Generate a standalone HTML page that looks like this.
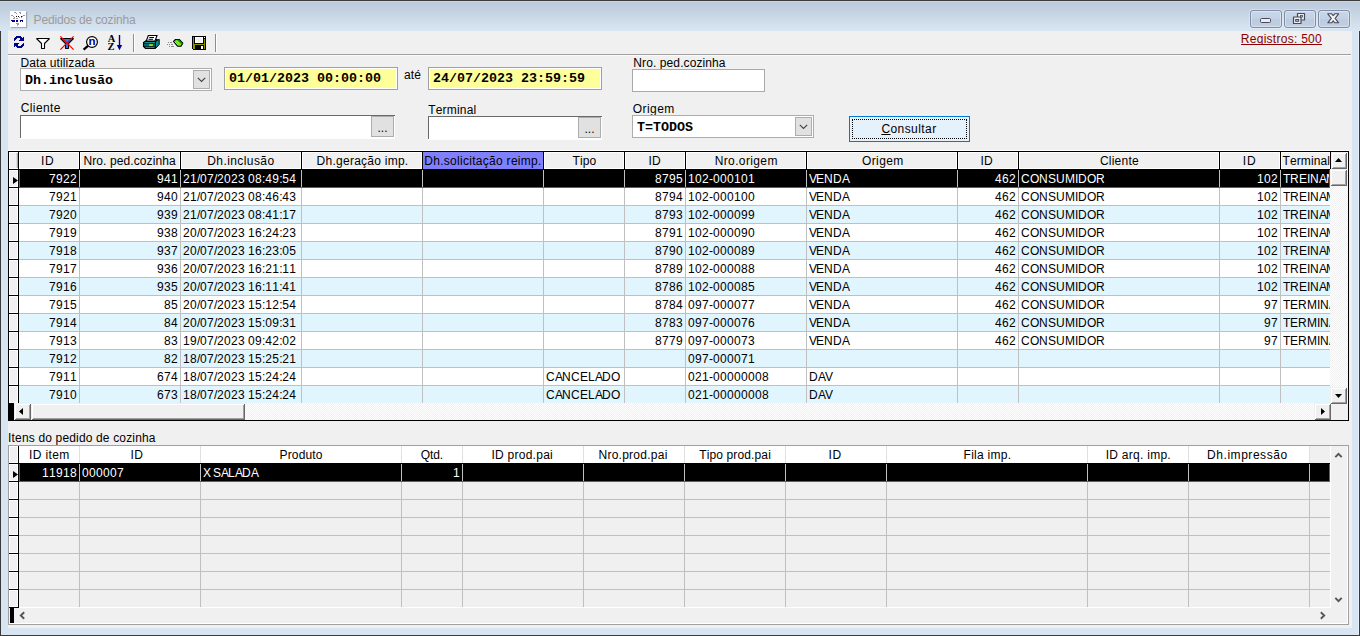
<!DOCTYPE html>
<html lang="pt-BR"><head><meta charset="utf-8"><title>Pedidos de cozinha</title>
<style>
html,body{margin:0;padding:0;}
body{width:1360px;height:636px;overflow:hidden;background:#d7e4f2;position:relative;font-family:"Liberation Sans",Arial,sans-serif;font-size:12px;color:#000;font-kerning:none;}
.a{position:absolute;}
.t{position:absolute;white-space:nowrap;line-height:14px;height:14px;font-size:12px;}
.m{position:absolute;white-space:nowrap;font-family:"Liberation Mono","DejaVu Sans Mono",monospace;font-weight:bold;font-size:13.33px;line-height:15px;height:15px;}
.clip{overflow:hidden;}
</style></head>
<body>
<div class="a" style="left:0px;top:0px;width:1360px;height:1px;background:#3c3c3c;"></div>
<div class="a" style="left:0px;top:1px;width:1360px;height:30px;background:linear-gradient(#bccbdb,#c2d0e0 30%,#d0ddeb 70%,#d8e5f3);"></div>
<div class="a" style="left:0px;top:1px;width:1360px;height:1px;background:#c8d6e6;"></div>
<div class="a" style="left:0px;top:31px;width:1px;height:605px;background:#3a3a3a;"></div>
<div class="a" style="left:1358px;top:31px;width:1px;height:604px;background:#e6eef8;"></div>
<div class="a" style="left:1359px;top:31px;width:1px;height:605px;background:#3a3a3a;"></div>
<div class="a" style="left:0px;top:635px;width:1360px;height:1px;background:#3a3a3a;"></div>
<div class="a" style="left:8px;top:31px;width:1344px;height:597px;background:#f0f0f0;"></div>
<div class="a" style="left:10px;top:11px;width:16px;height:16px;background:#fff;box-shadow:1px 1px 1px rgba(90,100,120,.45);"></div>
<svg class="a" style="left:10px;top:11px" width="16" height="16" viewBox="0 0 16 16" shape-rendering="crispEdges"><path d="M4 1h2v1h-2zM9 1h2v1h-2zM6 2h1v1h-1zM10 2h1v1h-1zM1 4h2v1h-2zM13 4h2v1h-2zM3 5h1v1h-1zM12 5h1v1h-1zM4 6h1v1h-1zM9 6h1v1h-1zM11 6h1v1h-1zM3 7h2v1h-2zM6 7h2v1h-2zM6 12h3v1h-3zM7 13h2v1h-2zM7 14h1v1h-1z" fill="#9c9c9c"/><path d="M6 5h1v1h-1zM8 5h1v1h-1zM11 5h1v1h-1z" fill="#111"/><path d="M1 9h4v1h-4zM6 9h2v1h-2zM10 9h3v1h-3zM2 10h3v1h-3zM6 10h2v1h-2zM10 10h1v1h-1zM12 10h1v1h-1z" fill="#00008b"/></svg>
<div class="t" style="left:33.62px;top:13px;letter-spacing:-0.16px;color:#9b9b9b;">Pedidos de cozinha</div>
<div class="a" style="left:1250px;top:10px;width:30px;height:16px;border:1px solid #7f8dab;border-radius:3px;background:linear-gradient(#c9d7e8,#c2d1e4 48%,#bbcbe0 52%,#c1d0e4);box-shadow:inset 0 0 0 1px rgba(255,255,255,.38),0 0 0 1px rgba(255,255,255,.3);"></div>
<div class="a" style="left:1260px;top:18px;width:9px;height:3px;background:#ececec;border:1px solid #454b5c;border-radius:1.500px;"></div>
<div class="a" style="left:1284px;top:10px;width:30px;height:16px;border:1px solid #7f8dab;border-radius:3px;background:linear-gradient(#c9d7e8,#c2d1e4 48%,#bbcbe0 52%,#c1d0e4);box-shadow:inset 0 0 0 1px rgba(255,255,255,.38),0 0 0 1px rgba(255,255,255,.3);"></div>
<svg class="a" style="left:1292px;top:12px" width="14" height="13" viewBox="0 0 14 13"><g fill="#f0f0f0" stroke="#454b5c" stroke-width="1.200" stroke-linejoin="round"><path d="M5.500 1.500h7v6.500h-7z"/><path d="M1.500 5h7.500v6.500h-7.500z"/></g><rect x="8.500" y="3.500" width="2" height="1.500" fill="#c6d3e5" stroke="#454b5c" stroke-width=".8"/><rect x="3.700" y="7.500" width="3" height="1.800" fill="#c6d3e5" stroke="#454b5c" stroke-width="1"/></svg>
<div class="a" style="left:1318px;top:10px;width:30px;height:16px;border:1px solid #7f8dab;border-radius:3px;background:linear-gradient(#c9d7e8,#c2d1e4 48%,#bbcbe0 52%,#c1d0e4);box-shadow:inset 0 0 0 1px rgba(255,255,255,.38),0 0 0 1px rgba(255,255,255,.3);"></div>
<svg class="a" style="left:1327px;top:13px" width="13" height="11" viewBox="0 0 13 11"><path d="M0.800 0.800L4.600 0.800L6.200 2.700L7.800 0.800L11.600 0.800L8.100 5.300L11.600 9.800L7.800 9.800L6.200 7.900L4.600 9.800L0.800 9.800L4.300 5.300z" fill="#f4f4f4" stroke="#454b5c" stroke-width="1.100" stroke-linejoin="round"/></svg>
<div class="a" style="left:8px;top:54px;width:1343px;height:1px;background:#a0a0a0;"></div>
<div class="a" style="left:8px;top:55px;width:1343px;height:1px;background:#fbfbfb;"></div>
<div class="t" style="left:1240.82px;top:32px;letter-spacing:0.27px;color:#8b0000;text-decoration:underline;text-decoration-skip-ink:none;height:13px;overflow:hidden;">Registros: 500</div>
<div class="a" style="left:133px;top:34px;width:1px;height:18px;background:#8e8e8e;"></div>
<div class="a" style="left:134px;top:34px;width:1px;height:18px;background:#fff;"></div>
<div class="a" style="left:215px;top:34px;width:1px;height:18px;background:#8e8e8e;"></div>
<div class="a" style="left:216px;top:34px;width:1px;height:18px;background:#fff;"></div>
<svg class="a" style="left:14px;top:36px" width="10" height="12" viewBox="0 0 10 12" shape-rendering="crispEdges"><path d="M2 0h5v1h-5zM1 1h7v1h-7zM9 1h1v1h-1zM0 2h3v1h-3zM6 2h4v1h-4zM0 3h2v1h-2zM6 3h4v1h-4zM0 4h1v1h-1zM5 4h5v1h-5zM0 7h5v1h-5zM9 7h1v1h-1zM0 8h4v1h-4zM8 8h2v1h-2zM0 9h4v1h-4zM7 9h3v1h-3zM0 10h1v1h-1zM2 10h7v1h-7zM3 11h5v1h-5z" fill="#00008b"/></svg>
<svg class="a" style="left:35px;top:37px" width="16" height="13" viewBox="0 0 16 13"><path d="M1.500 1.500H14.500L9.500 6.500V11.500H6.500V6.500Z" fill="#fff" stroke="#000" stroke-width="1.100" stroke-linejoin="bevel"/></svg>
<svg class="a" style="left:59px;top:35px" width="16" height="16" viewBox="0 0 16 16"><path d="M1.500 3.500H14.500L9.500 8.500V13.500H6.500V8.500Z" fill="#1787ff" stroke="#000" stroke-width="1.100" stroke-linejoin="bevel"/><path d="M1.400 1.400L14.600 14.600M14.600 1.400L1.400 14.600" stroke="#f00" stroke-width="1.300" fill="none"/></svg>
<svg class="a" style="left:82px;top:35px" width="17" height="16" viewBox="0 0 17 16"><path d="M6.300 10.700L1.600 14.600" stroke="#000" stroke-width="2.300" fill="none"/><circle cx="10" cy="7" r="5.400" fill="#fff" stroke="#000" stroke-width="1.200"/><text x="10" y="10" text-anchor="middle" font-family="Liberation Sans,Arial,sans-serif" font-weight="bold" font-size="11.500" fill="#00008b">n</text></svg>
<svg class="a" style="left:106px;top:34px" width="18" height="18" viewBox="0 0 18 18"><text x="5.500" y="8" text-anchor="middle" font-family="Liberation Serif,Times New Roman,serif" font-weight="bold" font-size="10.500" fill="#000">A</text><text x="5" y="16" text-anchor="middle" font-family="Liberation Serif,Times New Roman,serif" font-weight="bold" font-size="10.500" fill="#000">Z</text><path d="M13.500 1V12" stroke="#00008b" stroke-width="1.400"/><path d="M10.800 11H16.200L13.500 16.200z" fill="#00008b"/></svg>
<svg class="a" style="left:142px;top:34px" width="19" height="16" viewBox="0 0 19 16"><path d="M13.500 7.500L17.200 5.300L17.200 10.500L13.500 14.500z" fill="#0a8c8c" stroke="#000" stroke-width="1"/><path d="M3 7.500L5 5.500L15.500 5.500L13.500 7.500z" fill="#0a8c8c" stroke="#000" stroke-width="1"/><path d="M1.500 8.500L3 7.500L13.500 7.500L13.500 13.500L12.500 14.500L3.500 14.500L1.500 12.500z" fill="#009696" stroke="#000" stroke-width="1.100"/><path d="M2 9.800H13M2 12.200H13" stroke="#000" stroke-width="1"/><rect x="7.200" y="10.400" width="3.600" height="1.300" fill="#ff0"/><path d="M4.300 7L6.300 1.500L15 1.500L13 7z" fill="#fff" stroke="#000" stroke-width="1.100"/><path d="M7.300 3.500H12M6.500 5.300H11" stroke="#000" stroke-width="1"/></svg>
<svg class="a" style="left:166px;top:37px" width="18" height="12" viewBox="0 0 18 12"><g fill="#8a8a8a"><rect x="2" y="5" width="1" height="1"/><rect x="4" y="5" width="2" height="1"/><rect x="1" y="7" width="1" height="1"/><rect x="3" y="7" width="1" height="1"/><rect x="5" y="7" width="2" height="1"/><rect x="3" y="9" width="1" height="1"/><rect x="5" y="9" width="3" height="1"/></g><path d="M7.500 4.500L9.500 2.500L13.200 2.500L16.800 6.200L15 9.200L11.500 9.200z" fill="#2fdc2f" stroke="#000" stroke-width="1.100" stroke-linejoin="round"/><path d="M11 2.800L16.200 7.400L16.500 6.200L13 2.800z" fill="#0a8f0a"/><path d="M8.600 4.400L12.600 8.400M10.200 3.600L14.400 7.800" stroke="#f4f400" stroke-width="1" fill="none"/></svg>
<svg class="a" style="left:192px;top:36px" width="14" height="14" viewBox="0 0 14 14" shape-rendering="crispEdges"><rect x="0" y="0" width="14" height="14" fill="#000"/><rect x="1" y="1" width="12" height="12" fill="#8f8f00"/><rect x="2" y="1" width="10" height="7" fill="#000"/><rect x="3" y="1" width="8" height="6" fill="#fff"/><rect x="4" y="2" width="6" height="4" fill="#f0f0f0"/><rect x="3" y="9" width="9" height="4" fill="#000"/><rect x="9" y="10" width="2" height="3" fill="#fff"/><rect x="12" y="1" width="1" height="2" fill="#000"/><rect x="12" y="1" width="1" height="1" fill="#fff"/><rect x="0" y="13" width="1" height="1" fill="#f0f0f0"/></svg>
<div class="t" style="left:20.42px;top:56px;letter-spacing:0.12px;">Data utilizada</div>
<div class="t" style="left:20.79px;top:101px;letter-spacing:0.38px;">Cliente</div>
<div class="t" style="left:403.99px;top:68px;letter-spacing:0.13px;">até</div>
<div class="t" style="left:428.23px;top:103px;letter-spacing:0.19px;">Terminal</div>
<div class="t" style="left:633.32px;top:56px;letter-spacing:0.1px;">Nro. ped.cozinha</div>
<div class="t" style="left:632.63px;top:102px;letter-spacing:0.48px;">Origem</div>
<div class="a" style="left:20px;top:68px;width:190px;height:21px;border:1px solid #adadad;background:#fff;"></div>
<div class="a" style="left:193px;top:70px;width:15px;height:17px;border:1px solid #adadad;background:#e1e1e1;"></div>
<svg class="a" style="left:197px;top:77px" width="9" height="6" viewBox="0 0 9 6"><path d="M0.800 0.800L4.500 4.500L8.200 0.800" fill="none" stroke="#444" stroke-width="1.150"/></svg>
<div class="m" style="left:25px;top:73px;">Dh.inclusão</div>
<div class="a" style="left:632px;top:115px;width:180px;height:21px;border:1px solid #adadad;background:#fff;"></div>
<div class="a" style="left:795px;top:117px;width:15px;height:17px;border:1px solid #adadad;background:#e1e1e1;"></div>
<svg class="a" style="left:799px;top:124px" width="9" height="6" viewBox="0 0 9 6"><path d="M0.800 0.800L4.500 4.500L8.200 0.800" fill="none" stroke="#444" stroke-width="1.150"/></svg>
<div class="m" style="left:637px;top:120px;">T=TODOS</div>
<div class="a" style="left:224px;top:67px;width:172px;height:21px;border:1px solid #a0a0a0;background:#fff;"></div>
<div class="a" style="left:226px;top:69px;width:170px;height:19px;background:#ffff99;"></div>
<div class="m" style="left:229px;top:71px;">01/01/2023 00:00:00</div>
<div class="a" style="left:428px;top:67px;width:172px;height:21px;border:1px solid #a0a0a0;background:#fff;"></div>
<div class="a" style="left:430px;top:69px;width:170px;height:19px;background:#ffff99;"></div>
<div class="m" style="left:433px;top:71px;">24/07/2023 23:59:59</div>
<div class="a" style="left:632px;top:69px;width:131px;height:21px;border:1px solid #a9a9a9;background:#fff;"></div>
<div class="a" style="left:20px;top:115px;width:375px;height:24px;background:#fff;"></div>
<div class="a" style="left:20px;top:115px;width:375px;height:1px;background:#696969;"></div>
<div class="a" style="left:20px;top:115px;width:1px;height:23px;background:#696969;"></div>
<div class="a" style="left:371px;top:116px;width:21px;height:19px;border:1px solid #adadad;background:#e1e1e1;"></div>
<div class="t" style="left:371px;top:121px;width:23px;text-align:center;">...</div>
<div class="a" style="left:428px;top:116px;width:174px;height:24px;background:#fff;"></div>
<div class="a" style="left:428px;top:116px;width:174px;height:1px;background:#696969;"></div>
<div class="a" style="left:428px;top:116px;width:1px;height:23px;background:#696969;"></div>
<div class="a" style="left:578px;top:117px;width:21px;height:19px;border:1px solid #adadad;background:#e1e1e1;"></div>
<div class="t" style="left:578px;top:122px;width:23px;text-align:center;">...</div>
<div class="a" style="left:849px;top:116px;width:119px;height:24px;border:1px solid #0078d7;background:#e5f1fb;"></div>
<div class="a" style="left:852px;top:119px;width:113px;height:18px;border:1px dotted #000;"></div>
<div class="t" style="left:881.39px;top:122px;letter-spacing:0.43px;"><u>C</u>onsultar</div>
<div class="a" style="left:8px;top:150px;width:1341px;height:1px;background:#fff;"></div>
<div class="a" style="left:8px;top:151px;width:1341px;height:270px;background:#000;"></div>
<div class="a" style="left:9px;top:152px;width:1339px;height:268px;background:#fff;"></div>
<div class="a" style="left:9px;top:152px;width:9px;height:17px;background:#f0f0f0;box-shadow:inset 1px 1px 0 #fff,inset 0 -1px 0 #fff,inset -1px 0 0 #a8a8a8,inset -2px 0 0 #dcdcdc;"></div>
<div class="a" style="left:18px;top:152px;width:1px;height:251px;background:#000;"></div>
<div class="a" style="left:9px;top:169px;width:1322px;height:1px;background:#000;"></div>
<div class="a" style="left:19px;top:152px;width:60px;height:17px;background:#f0f0f0;box-shadow:inset 0 0 0 1px #fff;"></div>
<div class="a" style="left:79px;top:152px;width:1px;height:17px;background:#000;"></div>
<div class="a" style="left:80px;top:152px;width:100px;height:17px;background:#f0f0f0;box-shadow:inset 0 0 0 1px #fff;"></div>
<div class="a" style="left:180px;top:152px;width:1px;height:17px;background:#000;"></div>
<div class="a" style="left:181px;top:152px;width:120px;height:17px;background:#f0f0f0;box-shadow:inset 0 0 0 1px #fff;"></div>
<div class="a" style="left:301px;top:152px;width:1px;height:17px;background:#000;"></div>
<div class="a" style="left:302px;top:152px;width:120px;height:17px;background:#f0f0f0;box-shadow:inset 0 0 0 1px #fff;"></div>
<div class="a" style="left:422px;top:152px;width:1px;height:17px;background:#000;"></div>
<div class="a" style="left:423px;top:152px;width:120px;height:17px;background:#8080ff;"></div>
<div class="a" style="left:543px;top:152px;width:1px;height:17px;background:#000;"></div>
<div class="a" style="left:544px;top:152px;width:80px;height:17px;background:#f0f0f0;box-shadow:inset 0 0 0 1px #fff;"></div>
<div class="a" style="left:624px;top:152px;width:1px;height:17px;background:#000;"></div>
<div class="a" style="left:625px;top:152px;width:60px;height:17px;background:#f0f0f0;box-shadow:inset 0 0 0 1px #fff;"></div>
<div class="a" style="left:685px;top:152px;width:1px;height:17px;background:#000;"></div>
<div class="a" style="left:686px;top:152px;width:120px;height:17px;background:#f0f0f0;box-shadow:inset 0 0 0 1px #fff;"></div>
<div class="a" style="left:806px;top:152px;width:1px;height:17px;background:#000;"></div>
<div class="a" style="left:807px;top:152px;width:150px;height:17px;background:#f0f0f0;box-shadow:inset 0 0 0 1px #fff;"></div>
<div class="a" style="left:957px;top:152px;width:1px;height:17px;background:#000;"></div>
<div class="a" style="left:958px;top:152px;width:60px;height:17px;background:#f0f0f0;box-shadow:inset 0 0 0 1px #fff;"></div>
<div class="a" style="left:1018px;top:152px;width:1px;height:17px;background:#000;"></div>
<div class="a" style="left:1019px;top:152px;width:200px;height:17px;background:#f0f0f0;box-shadow:inset 0 0 0 1px #fff;"></div>
<div class="a" style="left:1219px;top:152px;width:1px;height:17px;background:#000;"></div>
<div class="a" style="left:1220px;top:152px;width:60px;height:17px;background:#f0f0f0;box-shadow:inset 0 0 0 1px #fff;"></div>
<div class="a" style="left:1280px;top:152px;width:1px;height:17px;background:#000;"></div>
<div class="a" style="left:1281px;top:152px;width:49px;height:17px;background:#f0f0f0;box-shadow:inset 0 0 0 1px #fff;"></div>
<div class="a" style="left:1330px;top:152px;width:1px;height:17px;background:#000;"></div>
<div class="t" style="left:40.99px;top:154px;letter-spacing:0.58px;">ID</div>
<div class="t" style="left:83.52px;top:154px;letter-spacing:0.09px;">Nro. ped.cozinha</div>
<div class="t" style="left:207.22px;top:154px;letter-spacing:0.42px;">Dh.inclusão</div>
<div class="t" style="left:316.62px;top:154px;letter-spacing:0.25px;">Dh.geração imp.</div>
<div class="t" style="left:424.22px;top:154px;letter-spacing:0.29px;">Dh.solicitação reimp.</div>
<div class="t" style="left:572.53px;top:154px;letter-spacing:0.08px;">Tipo</div>
<div class="t" style="left:648.49px;top:154px;letter-spacing:0.18px;">ID</div>
<div class="t" style="left:714.72px;top:154px;letter-spacing:0.37px;">Nro.origem</div>
<div class="t" style="left:861.93px;top:154px;letter-spacing:0.42px;">Origem</div>
<div class="t" style="left:980.59px;top:154px;letter-spacing:0.18px;">ID</div>
<div class="t" style="left:1099.89px;top:154px;letter-spacing:0.25px;">Cliente</div>
<div class="t" style="left:1242.69px;top:154px;letter-spacing:1.08px;">ID</div>
<div class="a clip" style="left:1281px;top:152px;width:49px;height:17px;"><div class="t" style="left:1.53px;top:2px;letter-spacing:0.11px;">Terminal</div>
</div>
<div class="a" style="left:9px;top:170px;width:9px;height:17px;background:#f0f0f0;box-shadow:inset 0 0 0 1px #fff;"></div>
<div class="a" style="left:9px;top:187px;width:9px;height:1px;background:#000;"></div>
<div class="a" style="left:19px;top:170px;width:1311px;height:17px;background:#000;"></div>
<div class="a" style="left:19px;top:187px;width:1311px;height:1px;background:#c0c0c0;"></div>
<div class="t" style="left:49px;top:172px;color:#fff;"><span style="letter-spacing:0.33px">7922</span></div>
<div class="t" style="left:157px;top:172px;color:#fff;"><span style="letter-spacing:0.33px">941</span></div>
<div class="t" style="left:183px;top:172px;width:118px;overflow:hidden;color:#fff;"><span style="letter-spacing:0.33px">21</span><span style="letter-spacing:-0.33px">/</span><span style="letter-spacing:0.33px">07</span><span style="letter-spacing:-0.33px">/</span><span style="letter-spacing:0.33px">2023</span><span style="letter-spacing:-0.33px"> </span><span style="letter-spacing:0.33px">08</span><span style="letter-spacing:-0.33px">:</span><span style="letter-spacing:0.33px">49</span><span style="letter-spacing:-0.33px">:</span><span style="letter-spacing:0.33px">54</span></div>
<div class="t" style="left:655px;top:172px;color:#fff;"><span style="letter-spacing:0.33px">8795</span></div>
<div class="t" style="left:688px;top:172px;width:118px;overflow:hidden;color:#fff;"><span style="letter-spacing:0.33px">102</span>-<span style="letter-spacing:0.33px">000101</span></div>
<div class="t" style="left:809px;top:172px;width:148px;overflow:hidden;color:#fff;"><span style="letter-spacing:-1px">V</span>E<span style="letter-spacing:0.33px">ND</span><span style="letter-spacing:-1px">A</span></div>
<div class="t" style="left:995px;top:172px;color:#fff;"><span style="letter-spacing:0.33px">462</span></div>
<div class="t" style="left:1021px;top:172px;width:198px;overflow:hidden;color:#fff;"><span style="letter-spacing:0.33px">C</span><span style="letter-spacing:-0.33px">O</span><span style="letter-spacing:0.33px">N</span>S<span style="letter-spacing:0.33px">U</span>M<span style="letter-spacing:-0.33px">I</span><span style="letter-spacing:0.33px">D</span><span style="letter-spacing:-0.33px">O</span><span style="letter-spacing:0.33px">R</span></div>
<div class="t" style="left:1257px;top:172px;color:#fff;"><span style="letter-spacing:0.33px">102</span></div>
<div class="t" style="left:1283px;top:172px;width:47px;overflow:hidden;color:#fff;"><span style="letter-spacing:-0.33px">T</span><span style="letter-spacing:0.33px">R</span>E<span style="letter-spacing:-0.33px">I</span><span style="letter-spacing:0.33px">N</span><span style="letter-spacing:-1px">A</span>ME<span style="letter-spacing:0.33px">N</span><span style="letter-spacing:-0.33px">TO</span></div>
<div class="a" style="left:9px;top:188px;width:9px;height:17px;background:#f0f0f0;box-shadow:inset 0 0 0 1px #fff;"></div>
<div class="a" style="left:9px;top:205px;width:9px;height:1px;background:#000;"></div>
<div class="a" style="left:19px;top:205px;width:1311px;height:1px;background:#c0c0c0;"></div>
<div class="t" style="left:49px;top:190px;"><span style="letter-spacing:0.33px">7921</span></div>
<div class="t" style="left:157px;top:190px;"><span style="letter-spacing:0.33px">940</span></div>
<div class="t" style="left:183px;top:190px;width:118px;overflow:hidden;"><span style="letter-spacing:0.33px">21</span><span style="letter-spacing:-0.33px">/</span><span style="letter-spacing:0.33px">07</span><span style="letter-spacing:-0.33px">/</span><span style="letter-spacing:0.33px">2023</span><span style="letter-spacing:-0.33px"> </span><span style="letter-spacing:0.33px">08</span><span style="letter-spacing:-0.33px">:</span><span style="letter-spacing:0.33px">46</span><span style="letter-spacing:-0.33px">:</span><span style="letter-spacing:0.33px">43</span></div>
<div class="t" style="left:655px;top:190px;"><span style="letter-spacing:0.33px">8794</span></div>
<div class="t" style="left:688px;top:190px;width:118px;overflow:hidden;"><span style="letter-spacing:0.33px">102</span>-<span style="letter-spacing:0.33px">000100</span></div>
<div class="t" style="left:809px;top:190px;width:148px;overflow:hidden;"><span style="letter-spacing:-1px">V</span>E<span style="letter-spacing:0.33px">ND</span><span style="letter-spacing:-1px">A</span></div>
<div class="t" style="left:995px;top:190px;"><span style="letter-spacing:0.33px">462</span></div>
<div class="t" style="left:1021px;top:190px;width:198px;overflow:hidden;"><span style="letter-spacing:0.33px">C</span><span style="letter-spacing:-0.33px">O</span><span style="letter-spacing:0.33px">N</span>S<span style="letter-spacing:0.33px">U</span>M<span style="letter-spacing:-0.33px">I</span><span style="letter-spacing:0.33px">D</span><span style="letter-spacing:-0.33px">O</span><span style="letter-spacing:0.33px">R</span></div>
<div class="t" style="left:1257px;top:190px;"><span style="letter-spacing:0.33px">102</span></div>
<div class="t" style="left:1283px;top:190px;width:47px;overflow:hidden;"><span style="letter-spacing:-0.33px">T</span><span style="letter-spacing:0.33px">R</span>E<span style="letter-spacing:-0.33px">I</span><span style="letter-spacing:0.33px">N</span><span style="letter-spacing:-1px">A</span>ME<span style="letter-spacing:0.33px">N</span><span style="letter-spacing:-0.33px">TO</span></div>
<div class="a" style="left:9px;top:206px;width:9px;height:17px;background:#f0f0f0;box-shadow:inset 0 0 0 1px #fff;"></div>
<div class="a" style="left:9px;top:223px;width:9px;height:1px;background:#000;"></div>
<div class="a" style="left:19px;top:206px;width:1311px;height:17px;background:#e1f5fe;"></div>
<div class="a" style="left:19px;top:223px;width:1311px;height:1px;background:#c0c0c0;"></div>
<div class="t" style="left:49px;top:208px;"><span style="letter-spacing:0.33px">7920</span></div>
<div class="t" style="left:157px;top:208px;"><span style="letter-spacing:0.33px">939</span></div>
<div class="t" style="left:183px;top:208px;width:118px;overflow:hidden;"><span style="letter-spacing:0.33px">21</span><span style="letter-spacing:-0.33px">/</span><span style="letter-spacing:0.33px">07</span><span style="letter-spacing:-0.33px">/</span><span style="letter-spacing:0.33px">2023</span><span style="letter-spacing:-0.33px"> </span><span style="letter-spacing:0.33px">08</span><span style="letter-spacing:-0.33px">:</span><span style="letter-spacing:0.33px">41</span><span style="letter-spacing:-0.33px">:</span><span style="letter-spacing:0.33px">17</span></div>
<div class="t" style="left:655px;top:208px;"><span style="letter-spacing:0.33px">8793</span></div>
<div class="t" style="left:688px;top:208px;width:118px;overflow:hidden;"><span style="letter-spacing:0.33px">102</span>-<span style="letter-spacing:0.33px">000099</span></div>
<div class="t" style="left:809px;top:208px;width:148px;overflow:hidden;"><span style="letter-spacing:-1px">V</span>E<span style="letter-spacing:0.33px">ND</span><span style="letter-spacing:-1px">A</span></div>
<div class="t" style="left:995px;top:208px;"><span style="letter-spacing:0.33px">462</span></div>
<div class="t" style="left:1021px;top:208px;width:198px;overflow:hidden;"><span style="letter-spacing:0.33px">C</span><span style="letter-spacing:-0.33px">O</span><span style="letter-spacing:0.33px">N</span>S<span style="letter-spacing:0.33px">U</span>M<span style="letter-spacing:-0.33px">I</span><span style="letter-spacing:0.33px">D</span><span style="letter-spacing:-0.33px">O</span><span style="letter-spacing:0.33px">R</span></div>
<div class="t" style="left:1257px;top:208px;"><span style="letter-spacing:0.33px">102</span></div>
<div class="t" style="left:1283px;top:208px;width:47px;overflow:hidden;"><span style="letter-spacing:-0.33px">T</span><span style="letter-spacing:0.33px">R</span>E<span style="letter-spacing:-0.33px">I</span><span style="letter-spacing:0.33px">N</span><span style="letter-spacing:-1px">A</span>ME<span style="letter-spacing:0.33px">N</span><span style="letter-spacing:-0.33px">TO</span></div>
<div class="a" style="left:9px;top:224px;width:9px;height:17px;background:#f0f0f0;box-shadow:inset 0 0 0 1px #fff;"></div>
<div class="a" style="left:9px;top:241px;width:9px;height:1px;background:#000;"></div>
<div class="a" style="left:19px;top:241px;width:1311px;height:1px;background:#c0c0c0;"></div>
<div class="t" style="left:49px;top:226px;"><span style="letter-spacing:0.33px">7919</span></div>
<div class="t" style="left:157px;top:226px;"><span style="letter-spacing:0.33px">938</span></div>
<div class="t" style="left:183px;top:226px;width:118px;overflow:hidden;"><span style="letter-spacing:0.33px">20</span><span style="letter-spacing:-0.33px">/</span><span style="letter-spacing:0.33px">07</span><span style="letter-spacing:-0.33px">/</span><span style="letter-spacing:0.33px">2023</span><span style="letter-spacing:-0.33px"> </span><span style="letter-spacing:0.33px">16</span><span style="letter-spacing:-0.33px">:</span><span style="letter-spacing:0.33px">24</span><span style="letter-spacing:-0.33px">:</span><span style="letter-spacing:0.33px">23</span></div>
<div class="t" style="left:655px;top:226px;"><span style="letter-spacing:0.33px">8791</span></div>
<div class="t" style="left:688px;top:226px;width:118px;overflow:hidden;"><span style="letter-spacing:0.33px">102</span>-<span style="letter-spacing:0.33px">000090</span></div>
<div class="t" style="left:809px;top:226px;width:148px;overflow:hidden;"><span style="letter-spacing:-1px">V</span>E<span style="letter-spacing:0.33px">ND</span><span style="letter-spacing:-1px">A</span></div>
<div class="t" style="left:995px;top:226px;"><span style="letter-spacing:0.33px">462</span></div>
<div class="t" style="left:1021px;top:226px;width:198px;overflow:hidden;"><span style="letter-spacing:0.33px">C</span><span style="letter-spacing:-0.33px">O</span><span style="letter-spacing:0.33px">N</span>S<span style="letter-spacing:0.33px">U</span>M<span style="letter-spacing:-0.33px">I</span><span style="letter-spacing:0.33px">D</span><span style="letter-spacing:-0.33px">O</span><span style="letter-spacing:0.33px">R</span></div>
<div class="t" style="left:1257px;top:226px;"><span style="letter-spacing:0.33px">102</span></div>
<div class="t" style="left:1283px;top:226px;width:47px;overflow:hidden;"><span style="letter-spacing:-0.33px">T</span><span style="letter-spacing:0.33px">R</span>E<span style="letter-spacing:-0.33px">I</span><span style="letter-spacing:0.33px">N</span><span style="letter-spacing:-1px">A</span>ME<span style="letter-spacing:0.33px">N</span><span style="letter-spacing:-0.33px">TO</span></div>
<div class="a" style="left:9px;top:242px;width:9px;height:17px;background:#f0f0f0;box-shadow:inset 0 0 0 1px #fff;"></div>
<div class="a" style="left:9px;top:259px;width:9px;height:1px;background:#000;"></div>
<div class="a" style="left:19px;top:242px;width:1311px;height:17px;background:#e1f5fe;"></div>
<div class="a" style="left:19px;top:259px;width:1311px;height:1px;background:#c0c0c0;"></div>
<div class="t" style="left:49px;top:244px;"><span style="letter-spacing:0.33px">7918</span></div>
<div class="t" style="left:157px;top:244px;"><span style="letter-spacing:0.33px">937</span></div>
<div class="t" style="left:183px;top:244px;width:118px;overflow:hidden;"><span style="letter-spacing:0.33px">20</span><span style="letter-spacing:-0.33px">/</span><span style="letter-spacing:0.33px">07</span><span style="letter-spacing:-0.33px">/</span><span style="letter-spacing:0.33px">2023</span><span style="letter-spacing:-0.33px"> </span><span style="letter-spacing:0.33px">16</span><span style="letter-spacing:-0.33px">:</span><span style="letter-spacing:0.33px">23</span><span style="letter-spacing:-0.33px">:</span><span style="letter-spacing:0.33px">05</span></div>
<div class="t" style="left:655px;top:244px;"><span style="letter-spacing:0.33px">8790</span></div>
<div class="t" style="left:688px;top:244px;width:118px;overflow:hidden;"><span style="letter-spacing:0.33px">102</span>-<span style="letter-spacing:0.33px">000089</span></div>
<div class="t" style="left:809px;top:244px;width:148px;overflow:hidden;"><span style="letter-spacing:-1px">V</span>E<span style="letter-spacing:0.33px">ND</span><span style="letter-spacing:-1px">A</span></div>
<div class="t" style="left:995px;top:244px;"><span style="letter-spacing:0.33px">462</span></div>
<div class="t" style="left:1021px;top:244px;width:198px;overflow:hidden;"><span style="letter-spacing:0.33px">C</span><span style="letter-spacing:-0.33px">O</span><span style="letter-spacing:0.33px">N</span>S<span style="letter-spacing:0.33px">U</span>M<span style="letter-spacing:-0.33px">I</span><span style="letter-spacing:0.33px">D</span><span style="letter-spacing:-0.33px">O</span><span style="letter-spacing:0.33px">R</span></div>
<div class="t" style="left:1257px;top:244px;"><span style="letter-spacing:0.33px">102</span></div>
<div class="t" style="left:1283px;top:244px;width:47px;overflow:hidden;"><span style="letter-spacing:-0.33px">T</span><span style="letter-spacing:0.33px">R</span>E<span style="letter-spacing:-0.33px">I</span><span style="letter-spacing:0.33px">N</span><span style="letter-spacing:-1px">A</span>ME<span style="letter-spacing:0.33px">N</span><span style="letter-spacing:-0.33px">TO</span></div>
<div class="a" style="left:9px;top:260px;width:9px;height:17px;background:#f0f0f0;box-shadow:inset 0 0 0 1px #fff;"></div>
<div class="a" style="left:9px;top:277px;width:9px;height:1px;background:#000;"></div>
<div class="a" style="left:19px;top:277px;width:1311px;height:1px;background:#c0c0c0;"></div>
<div class="t" style="left:49px;top:262px;"><span style="letter-spacing:0.33px">7917</span></div>
<div class="t" style="left:157px;top:262px;"><span style="letter-spacing:0.33px">936</span></div>
<div class="t" style="left:183px;top:262px;width:118px;overflow:hidden;"><span style="letter-spacing:0.33px">20</span><span style="letter-spacing:-0.33px">/</span><span style="letter-spacing:0.33px">07</span><span style="letter-spacing:-0.33px">/</span><span style="letter-spacing:0.33px">2023</span><span style="letter-spacing:-0.33px"> </span><span style="letter-spacing:0.33px">16</span><span style="letter-spacing:-0.33px">:</span><span style="letter-spacing:0.33px">21</span><span style="letter-spacing:-0.33px">:</span><span style="letter-spacing:0.33px">11</span></div>
<div class="t" style="left:655px;top:262px;"><span style="letter-spacing:0.33px">8789</span></div>
<div class="t" style="left:688px;top:262px;width:118px;overflow:hidden;"><span style="letter-spacing:0.33px">102</span>-<span style="letter-spacing:0.33px">000088</span></div>
<div class="t" style="left:809px;top:262px;width:148px;overflow:hidden;"><span style="letter-spacing:-1px">V</span>E<span style="letter-spacing:0.33px">ND</span><span style="letter-spacing:-1px">A</span></div>
<div class="t" style="left:995px;top:262px;"><span style="letter-spacing:0.33px">462</span></div>
<div class="t" style="left:1021px;top:262px;width:198px;overflow:hidden;"><span style="letter-spacing:0.33px">C</span><span style="letter-spacing:-0.33px">O</span><span style="letter-spacing:0.33px">N</span>S<span style="letter-spacing:0.33px">U</span>M<span style="letter-spacing:-0.33px">I</span><span style="letter-spacing:0.33px">D</span><span style="letter-spacing:-0.33px">O</span><span style="letter-spacing:0.33px">R</span></div>
<div class="t" style="left:1257px;top:262px;"><span style="letter-spacing:0.33px">102</span></div>
<div class="t" style="left:1283px;top:262px;width:47px;overflow:hidden;"><span style="letter-spacing:-0.33px">T</span><span style="letter-spacing:0.33px">R</span>E<span style="letter-spacing:-0.33px">I</span><span style="letter-spacing:0.33px">N</span><span style="letter-spacing:-1px">A</span>ME<span style="letter-spacing:0.33px">N</span><span style="letter-spacing:-0.33px">TO</span></div>
<div class="a" style="left:9px;top:278px;width:9px;height:17px;background:#f0f0f0;box-shadow:inset 0 0 0 1px #fff;"></div>
<div class="a" style="left:9px;top:295px;width:9px;height:1px;background:#000;"></div>
<div class="a" style="left:19px;top:278px;width:1311px;height:17px;background:#e1f5fe;"></div>
<div class="a" style="left:19px;top:295px;width:1311px;height:1px;background:#c0c0c0;"></div>
<div class="t" style="left:49px;top:280px;"><span style="letter-spacing:0.33px">7916</span></div>
<div class="t" style="left:157px;top:280px;"><span style="letter-spacing:0.33px">935</span></div>
<div class="t" style="left:183px;top:280px;width:118px;overflow:hidden;"><span style="letter-spacing:0.33px">20</span><span style="letter-spacing:-0.33px">/</span><span style="letter-spacing:0.33px">07</span><span style="letter-spacing:-0.33px">/</span><span style="letter-spacing:0.33px">2023</span><span style="letter-spacing:-0.33px"> </span><span style="letter-spacing:0.33px">16</span><span style="letter-spacing:-0.33px">:</span><span style="letter-spacing:0.33px">11</span><span style="letter-spacing:-0.33px">:</span><span style="letter-spacing:0.33px">41</span></div>
<div class="t" style="left:655px;top:280px;"><span style="letter-spacing:0.33px">8786</span></div>
<div class="t" style="left:688px;top:280px;width:118px;overflow:hidden;"><span style="letter-spacing:0.33px">102</span>-<span style="letter-spacing:0.33px">000085</span></div>
<div class="t" style="left:809px;top:280px;width:148px;overflow:hidden;"><span style="letter-spacing:-1px">V</span>E<span style="letter-spacing:0.33px">ND</span><span style="letter-spacing:-1px">A</span></div>
<div class="t" style="left:995px;top:280px;"><span style="letter-spacing:0.33px">462</span></div>
<div class="t" style="left:1021px;top:280px;width:198px;overflow:hidden;"><span style="letter-spacing:0.33px">C</span><span style="letter-spacing:-0.33px">O</span><span style="letter-spacing:0.33px">N</span>S<span style="letter-spacing:0.33px">U</span>M<span style="letter-spacing:-0.33px">I</span><span style="letter-spacing:0.33px">D</span><span style="letter-spacing:-0.33px">O</span><span style="letter-spacing:0.33px">R</span></div>
<div class="t" style="left:1257px;top:280px;"><span style="letter-spacing:0.33px">102</span></div>
<div class="t" style="left:1283px;top:280px;width:47px;overflow:hidden;"><span style="letter-spacing:-0.33px">T</span><span style="letter-spacing:0.33px">R</span>E<span style="letter-spacing:-0.33px">I</span><span style="letter-spacing:0.33px">N</span><span style="letter-spacing:-1px">A</span>ME<span style="letter-spacing:0.33px">N</span><span style="letter-spacing:-0.33px">TO</span></div>
<div class="a" style="left:9px;top:296px;width:9px;height:17px;background:#f0f0f0;box-shadow:inset 0 0 0 1px #fff;"></div>
<div class="a" style="left:9px;top:313px;width:9px;height:1px;background:#000;"></div>
<div class="a" style="left:19px;top:313px;width:1311px;height:1px;background:#c0c0c0;"></div>
<div class="t" style="left:49px;top:298px;"><span style="letter-spacing:0.33px">7915</span></div>
<div class="t" style="left:164px;top:298px;"><span style="letter-spacing:0.33px">85</span></div>
<div class="t" style="left:183px;top:298px;width:118px;overflow:hidden;"><span style="letter-spacing:0.33px">20</span><span style="letter-spacing:-0.33px">/</span><span style="letter-spacing:0.33px">07</span><span style="letter-spacing:-0.33px">/</span><span style="letter-spacing:0.33px">2023</span><span style="letter-spacing:-0.33px"> </span><span style="letter-spacing:0.33px">15</span><span style="letter-spacing:-0.33px">:</span><span style="letter-spacing:0.33px">12</span><span style="letter-spacing:-0.33px">:</span><span style="letter-spacing:0.33px">54</span></div>
<div class="t" style="left:655px;top:298px;"><span style="letter-spacing:0.33px">8784</span></div>
<div class="t" style="left:688px;top:298px;width:118px;overflow:hidden;"><span style="letter-spacing:0.33px">097</span>-<span style="letter-spacing:0.33px">000077</span></div>
<div class="t" style="left:809px;top:298px;width:148px;overflow:hidden;"><span style="letter-spacing:-1px">V</span>E<span style="letter-spacing:0.33px">ND</span><span style="letter-spacing:-1px">A</span></div>
<div class="t" style="left:995px;top:298px;"><span style="letter-spacing:0.33px">462</span></div>
<div class="t" style="left:1021px;top:298px;width:198px;overflow:hidden;"><span style="letter-spacing:0.33px">C</span><span style="letter-spacing:-0.33px">O</span><span style="letter-spacing:0.33px">N</span>S<span style="letter-spacing:0.33px">U</span>M<span style="letter-spacing:-0.33px">I</span><span style="letter-spacing:0.33px">D</span><span style="letter-spacing:-0.33px">O</span><span style="letter-spacing:0.33px">R</span></div>
<div class="t" style="left:1264px;top:298px;"><span style="letter-spacing:0.33px">97</span></div>
<div class="t" style="left:1283px;top:298px;width:47px;overflow:hidden;"><span style="letter-spacing:-0.33px">T</span>E<span style="letter-spacing:0.33px">R</span>M<span style="letter-spacing:-0.33px">I</span><span style="letter-spacing:0.33px">N</span><span style="letter-spacing:-1px">A</span><span style="letter-spacing:0.33px">L</span><span style="letter-spacing:-0.33px"> </span><span style="letter-spacing:0.33px">97</span></div>
<div class="a" style="left:9px;top:314px;width:9px;height:17px;background:#f0f0f0;box-shadow:inset 0 0 0 1px #fff;"></div>
<div class="a" style="left:9px;top:331px;width:9px;height:1px;background:#000;"></div>
<div class="a" style="left:19px;top:314px;width:1311px;height:17px;background:#e1f5fe;"></div>
<div class="a" style="left:19px;top:331px;width:1311px;height:1px;background:#c0c0c0;"></div>
<div class="t" style="left:49px;top:316px;"><span style="letter-spacing:0.33px">7914</span></div>
<div class="t" style="left:164px;top:316px;"><span style="letter-spacing:0.33px">84</span></div>
<div class="t" style="left:183px;top:316px;width:118px;overflow:hidden;"><span style="letter-spacing:0.33px">20</span><span style="letter-spacing:-0.33px">/</span><span style="letter-spacing:0.33px">07</span><span style="letter-spacing:-0.33px">/</span><span style="letter-spacing:0.33px">2023</span><span style="letter-spacing:-0.33px"> </span><span style="letter-spacing:0.33px">15</span><span style="letter-spacing:-0.33px">:</span><span style="letter-spacing:0.33px">09</span><span style="letter-spacing:-0.33px">:</span><span style="letter-spacing:0.33px">31</span></div>
<div class="t" style="left:655px;top:316px;"><span style="letter-spacing:0.33px">8783</span></div>
<div class="t" style="left:688px;top:316px;width:118px;overflow:hidden;"><span style="letter-spacing:0.33px">097</span>-<span style="letter-spacing:0.33px">000076</span></div>
<div class="t" style="left:809px;top:316px;width:148px;overflow:hidden;"><span style="letter-spacing:-1px">V</span>E<span style="letter-spacing:0.33px">ND</span><span style="letter-spacing:-1px">A</span></div>
<div class="t" style="left:995px;top:316px;"><span style="letter-spacing:0.33px">462</span></div>
<div class="t" style="left:1021px;top:316px;width:198px;overflow:hidden;"><span style="letter-spacing:0.33px">C</span><span style="letter-spacing:-0.33px">O</span><span style="letter-spacing:0.33px">N</span>S<span style="letter-spacing:0.33px">U</span>M<span style="letter-spacing:-0.33px">I</span><span style="letter-spacing:0.33px">D</span><span style="letter-spacing:-0.33px">O</span><span style="letter-spacing:0.33px">R</span></div>
<div class="t" style="left:1264px;top:316px;"><span style="letter-spacing:0.33px">97</span></div>
<div class="t" style="left:1283px;top:316px;width:47px;overflow:hidden;"><span style="letter-spacing:-0.33px">T</span>E<span style="letter-spacing:0.33px">R</span>M<span style="letter-spacing:-0.33px">I</span><span style="letter-spacing:0.33px">N</span><span style="letter-spacing:-1px">A</span><span style="letter-spacing:0.33px">L</span><span style="letter-spacing:-0.33px"> </span><span style="letter-spacing:0.33px">97</span></div>
<div class="a" style="left:9px;top:332px;width:9px;height:17px;background:#f0f0f0;box-shadow:inset 0 0 0 1px #fff;"></div>
<div class="a" style="left:9px;top:349px;width:9px;height:1px;background:#000;"></div>
<div class="a" style="left:19px;top:349px;width:1311px;height:1px;background:#c0c0c0;"></div>
<div class="t" style="left:49px;top:334px;"><span style="letter-spacing:0.33px">7913</span></div>
<div class="t" style="left:164px;top:334px;"><span style="letter-spacing:0.33px">83</span></div>
<div class="t" style="left:183px;top:334px;width:118px;overflow:hidden;"><span style="letter-spacing:0.33px">19</span><span style="letter-spacing:-0.33px">/</span><span style="letter-spacing:0.33px">07</span><span style="letter-spacing:-0.33px">/</span><span style="letter-spacing:0.33px">2023</span><span style="letter-spacing:-0.33px"> </span><span style="letter-spacing:0.33px">09</span><span style="letter-spacing:-0.33px">:</span><span style="letter-spacing:0.33px">42</span><span style="letter-spacing:-0.33px">:</span><span style="letter-spacing:0.33px">02</span></div>
<div class="t" style="left:655px;top:334px;"><span style="letter-spacing:0.33px">8779</span></div>
<div class="t" style="left:688px;top:334px;width:118px;overflow:hidden;"><span style="letter-spacing:0.33px">097</span>-<span style="letter-spacing:0.33px">000073</span></div>
<div class="t" style="left:809px;top:334px;width:148px;overflow:hidden;"><span style="letter-spacing:-1px">V</span>E<span style="letter-spacing:0.33px">ND</span><span style="letter-spacing:-1px">A</span></div>
<div class="t" style="left:995px;top:334px;"><span style="letter-spacing:0.33px">462</span></div>
<div class="t" style="left:1021px;top:334px;width:198px;overflow:hidden;"><span style="letter-spacing:0.33px">C</span><span style="letter-spacing:-0.33px">O</span><span style="letter-spacing:0.33px">N</span>S<span style="letter-spacing:0.33px">U</span>M<span style="letter-spacing:-0.33px">I</span><span style="letter-spacing:0.33px">D</span><span style="letter-spacing:-0.33px">O</span><span style="letter-spacing:0.33px">R</span></div>
<div class="t" style="left:1264px;top:334px;"><span style="letter-spacing:0.33px">97</span></div>
<div class="t" style="left:1283px;top:334px;width:47px;overflow:hidden;"><span style="letter-spacing:-0.33px">T</span>E<span style="letter-spacing:0.33px">R</span>M<span style="letter-spacing:-0.33px">I</span><span style="letter-spacing:0.33px">N</span><span style="letter-spacing:-1px">A</span><span style="letter-spacing:0.33px">L</span><span style="letter-spacing:-0.33px"> </span><span style="letter-spacing:0.33px">97</span></div>
<div class="a" style="left:9px;top:350px;width:9px;height:17px;background:#f0f0f0;box-shadow:inset 0 0 0 1px #fff;"></div>
<div class="a" style="left:9px;top:367px;width:9px;height:1px;background:#000;"></div>
<div class="a" style="left:19px;top:350px;width:1311px;height:17px;background:#e1f5fe;"></div>
<div class="a" style="left:19px;top:367px;width:1311px;height:1px;background:#c0c0c0;"></div>
<div class="t" style="left:49px;top:352px;"><span style="letter-spacing:0.33px">7912</span></div>
<div class="t" style="left:164px;top:352px;"><span style="letter-spacing:0.33px">82</span></div>
<div class="t" style="left:183px;top:352px;width:118px;overflow:hidden;"><span style="letter-spacing:0.33px">18</span><span style="letter-spacing:-0.33px">/</span><span style="letter-spacing:0.33px">07</span><span style="letter-spacing:-0.33px">/</span><span style="letter-spacing:0.33px">2023</span><span style="letter-spacing:-0.33px"> </span><span style="letter-spacing:0.33px">15</span><span style="letter-spacing:-0.33px">:</span><span style="letter-spacing:0.33px">25</span><span style="letter-spacing:-0.33px">:</span><span style="letter-spacing:0.33px">21</span></div>
<div class="t" style="left:688px;top:352px;width:118px;overflow:hidden;"><span style="letter-spacing:0.33px">097</span>-<span style="letter-spacing:0.33px">000071</span></div>
<div class="a" style="left:9px;top:368px;width:9px;height:17px;background:#f0f0f0;box-shadow:inset 0 0 0 1px #fff;"></div>
<div class="a" style="left:9px;top:385px;width:9px;height:1px;background:#000;"></div>
<div class="a" style="left:19px;top:385px;width:1311px;height:1px;background:#c0c0c0;"></div>
<div class="t" style="left:49px;top:370px;"><span style="letter-spacing:0.33px">7911</span></div>
<div class="t" style="left:157px;top:370px;"><span style="letter-spacing:0.33px">674</span></div>
<div class="t" style="left:183px;top:370px;width:118px;overflow:hidden;"><span style="letter-spacing:0.33px">18</span><span style="letter-spacing:-0.33px">/</span><span style="letter-spacing:0.33px">07</span><span style="letter-spacing:-0.33px">/</span><span style="letter-spacing:0.33px">2023</span><span style="letter-spacing:-0.33px"> </span><span style="letter-spacing:0.33px">15</span><span style="letter-spacing:-0.33px">:</span><span style="letter-spacing:0.33px">24</span><span style="letter-spacing:-0.33px">:</span><span style="letter-spacing:0.33px">24</span></div>
<div class="t" style="left:546px;top:370px;width:78px;overflow:hidden;"><span style="letter-spacing:0.33px">C</span><span style="letter-spacing:-1px">A</span><span style="letter-spacing:0.33px">NC</span>E<span style="letter-spacing:0.33px">L</span><span style="letter-spacing:-1px">A</span><span style="letter-spacing:0.33px">D</span><span style="letter-spacing:-0.33px">O</span></div>
<div class="t" style="left:688px;top:370px;width:118px;overflow:hidden;"><span style="letter-spacing:0.33px">021</span>-<span style="letter-spacing:0.33px">00000008</span></div>
<div class="t" style="left:809px;top:370px;width:148px;overflow:hidden;"><span style="letter-spacing:0.33px">D</span><span style="letter-spacing:-1px">AV</span></div>
<div class="a" style="left:9px;top:386px;width:9px;height:17px;background:#f0f0f0;box-shadow:inset 0 0 0 1px #fff;"></div>
<div class="a" style="left:9px;top:403px;width:9px;height:1px;background:#000;"></div>
<div class="a" style="left:19px;top:386px;width:1311px;height:17px;background:#e1f5fe;"></div>
<div class="t" style="left:49px;top:388px;"><span style="letter-spacing:0.33px">7910</span></div>
<div class="t" style="left:157px;top:388px;"><span style="letter-spacing:0.33px">673</span></div>
<div class="t" style="left:183px;top:388px;width:118px;overflow:hidden;"><span style="letter-spacing:0.33px">18</span><span style="letter-spacing:-0.33px">/</span><span style="letter-spacing:0.33px">07</span><span style="letter-spacing:-0.33px">/</span><span style="letter-spacing:0.33px">2023</span><span style="letter-spacing:-0.33px"> </span><span style="letter-spacing:0.33px">15</span><span style="letter-spacing:-0.33px">:</span><span style="letter-spacing:0.33px">24</span><span style="letter-spacing:-0.33px">:</span><span style="letter-spacing:0.33px">24</span></div>
<div class="t" style="left:546px;top:388px;width:78px;overflow:hidden;"><span style="letter-spacing:0.33px">C</span><span style="letter-spacing:-1px">A</span><span style="letter-spacing:0.33px">NC</span>E<span style="letter-spacing:0.33px">L</span><span style="letter-spacing:-1px">A</span><span style="letter-spacing:0.33px">D</span><span style="letter-spacing:-0.33px">O</span></div>
<div class="t" style="left:688px;top:388px;width:118px;overflow:hidden;"><span style="letter-spacing:0.33px">021</span>-<span style="letter-spacing:0.33px">00000008</span></div>
<div class="t" style="left:809px;top:388px;width:148px;overflow:hidden;"><span style="letter-spacing:0.33px">D</span><span style="letter-spacing:-1px">AV</span></div>
<div class="a" style="left:79px;top:170px;width:1px;height:233px;background:#c0c0c0;"></div>
<div class="a" style="left:180px;top:170px;width:1px;height:233px;background:#c0c0c0;"></div>
<div class="a" style="left:301px;top:170px;width:1px;height:233px;background:#c0c0c0;"></div>
<div class="a" style="left:422px;top:170px;width:1px;height:233px;background:#c0c0c0;"></div>
<div class="a" style="left:543px;top:170px;width:1px;height:233px;background:#c0c0c0;"></div>
<div class="a" style="left:624px;top:170px;width:1px;height:233px;background:#c0c0c0;"></div>
<div class="a" style="left:685px;top:170px;width:1px;height:233px;background:#c0c0c0;"></div>
<div class="a" style="left:806px;top:170px;width:1px;height:233px;background:#c0c0c0;"></div>
<div class="a" style="left:957px;top:170px;width:1px;height:233px;background:#c0c0c0;"></div>
<div class="a" style="left:1018px;top:170px;width:1px;height:233px;background:#c0c0c0;"></div>
<div class="a" style="left:1219px;top:170px;width:1px;height:233px;background:#c0c0c0;"></div>
<div class="a" style="left:1280px;top:170px;width:1px;height:233px;background:#c0c0c0;"></div>
<div class="a" style="left:19px;top:187px;width:1311px;height:1px;background:#0078d7;"></div>
<div class="a" style="left:19px;top:170px;width:1px;height:17px;background:#0078d7;"></div>
<div class="a" style="left:1329px;top:170px;width:1px;height:17px;background:#0078d7;"></div>
<svg class="a" style="left:13px;top:177px" width="5" height="7" viewBox="0 0 5 7"><path d="M0 0L5 3.500L0 7z" fill="#000"/></svg>
<div class="a" style="left:1330px;top:170px;width:18px;height:233px;background:#f8f8f8 conic-gradient(#fff 25%,#f0f0f0 0 50%,#fff 0 75%,#f0f0f0 0) 0 0/2px 2px;"></div>
<div class="a" style="left:1331px;top:152px;width:16px;height:17px;background:#f0f0f0;box-shadow:inset 1px 1px 0 #f0f0f0,inset -1px -1px 0 #696969,inset 2px 2px 0 #fff,inset -2px -2px 0 #a0a0a0;"></div>
<div class="a" style="left:1347px;top:152px;width:1px;height:17px;background:#fff;"></div>
<svg class="a" style="left:1335px;top:158px" width="7" height="4" viewBox="0 0 7 4"><path d="M0 4L3.500 0L7 4z" fill="#000"/></svg>
<div class="a" style="left:1330px;top:169px;width:17px;height:17px;background:#f0f0f0;box-shadow:inset 1px 1px 0 #f0f0f0,inset -1px -1px 0 #696969,inset 2px 2px 0 #fff,inset -2px -2px 0 #a0a0a0;"></div>
<div class="a" style="left:1330px;top:387px;width:17px;height:17px;background:#f0f0f0;box-shadow:inset 1px 1px 0 #f0f0f0,inset -1px -1px 0 #696969,inset 2px 2px 0 #fff,inset -2px -2px 0 #a0a0a0;"></div>
<svg class="a" style="left:1335px;top:394px" width="7" height="4" viewBox="0 0 7 4"><path d="M0 0L3.500 4L7 0z" fill="#000"/></svg>
<div class="a" style="left:9px;top:403px;width:5px;height:17px;background:#000;"></div>
<div class="a" style="left:14px;top:403px;width:1317px;height:17px;background:#f8f8f8 conic-gradient(#fff 25%,#f0f0f0 0 50%,#fff 0 75%,#f0f0f0 0) 0 0/2px 2px;"></div>
<div class="a" style="left:14px;top:403px;width:17px;height:17px;background:#f0f0f0;box-shadow:inset 1px 1px 0 #f0f0f0,inset -1px -1px 0 #696969,inset 2px 2px 0 #fff,inset -2px -2px 0 #a0a0a0;"></div>
<svg class="a" style="left:19px;top:408px" width="4" height="7" viewBox="0 0 4 7"><path d="M4 0L0 3.500L4 7z" fill="#000"/></svg>
<div class="a" style="left:31px;top:403px;width:214px;height:17px;background:#f0f0f0;box-shadow:inset 1px 1px 0 #f0f0f0,inset -1px -1px 0 #696969,inset 2px 2px 0 #fff,inset -2px -2px 0 #a0a0a0;"></div>
<div class="a" style="left:1314px;top:403px;width:17px;height:17px;background:#f0f0f0;box-shadow:inset 1px 1px 0 #f0f0f0,inset -1px -1px 0 #696969,inset 2px 2px 0 #fff,inset -2px -2px 0 #a0a0a0;"></div>
<svg class="a" style="left:1321px;top:408px" width="4" height="7" viewBox="0 0 4 7"><path d="M0 0L4 3.500L0 7z" fill="#000"/></svg>
<div class="a" style="left:1331px;top:404px;width:17px;height:16px;background:#f0f0f0;"></div>
<div class="t" style="left:8.09px;top:431px;letter-spacing:0.16px;">Itens do pedido de cozinha</div>
<div class="a" style="left:8px;top:445px;width:1341px;height:180px;background:#a0a0a0;"></div>
<div class="a" style="left:9px;top:446px;width:1339px;height:178px;background:#fff;"></div>
<div class="a" style="left:9px;top:446px;width:1338px;height:177px;background:#f0f0f0;"></div>
<div class="a" style="left:19px;top:446px;width:1290px;height:17px;background:#fff;"></div>
<div class="a" style="left:9px;top:446px;width:9px;height:17px;background:#f0f0f0;box-shadow:inset 0 0 0 1px #fff;"></div>
<div class="a" style="left:18px;top:446px;width:1px;height:162px;background:#000;"></div>
<div class="a" style="left:9px;top:463px;width:9px;height:1px;background:#000;"></div>
<div class="a" style="left:79px;top:446px;width:1px;height:17px;background:#e0e0e0;"></div>
<div class="t" style="left:29.09px;top:448px;letter-spacing:0.38px;">ID item</div>
<div class="a" style="left:200px;top:446px;width:1px;height:17px;background:#e0e0e0;"></div>
<div class="t" style="left:130.39px;top:448px;letter-spacing:0.58px;">ID</div>
<div class="a" style="left:401px;top:446px;width:1px;height:17px;background:#e0e0e0;"></div>
<div class="t" style="left:279.52px;top:448px;letter-spacing:0.16px;">Produto</div>
<div class="a" style="left:462px;top:446px;width:1px;height:17px;background:#e0e0e0;"></div>
<div class="t" style="left:420.73px;top:448px;letter-spacing:-0.1px;">Qtd.</div>
<div class="a" style="left:583px;top:446px;width:1px;height:17px;background:#e0e0e0;"></div>
<div class="t" style="left:491.39px;top:448px;letter-spacing:0.27px;">ID prod.pai</div>
<div class="a" style="left:684px;top:446px;width:1px;height:17px;background:#e0e0e0;"></div>
<div class="t" style="left:598.52px;top:448px;letter-spacing:0.25px;">Nro.prod.pai</div>
<div class="a" style="left:785px;top:446px;width:1px;height:17px;background:#e0e0e0;"></div>
<div class="t" style="left:699.23px;top:448px;letter-spacing:0.13px;">Tipo prod.pai</div>
<div class="a" style="left:886px;top:446px;width:1px;height:17px;background:#e0e0e0;"></div>
<div class="t" style="left:828.39px;top:448px;letter-spacing:0.68px;">ID</div>
<div class="a" style="left:1087px;top:446px;width:1px;height:17px;background:#e0e0e0;"></div>
<div class="t" style="left:963.52px;top:448px;letter-spacing:0.28px;">Fila imp.</div>
<div class="a" style="left:1188px;top:446px;width:1px;height:17px;background:#e0e0e0;"></div>
<div class="t" style="left:1105.69px;top:448px;letter-spacing:0.27px;">ID arq. imp.</div>
<div class="a" style="left:1309px;top:446px;width:1px;height:17px;background:#e0e0e0;"></div>
<div class="t" style="left:1207.12px;top:448px;letter-spacing:0.54px;">Dh.impressão</div>
<div class="a" style="left:19px;top:463px;width:1311px;height:18px;background:#000;"></div>
<div class="a" style="left:9px;top:464px;width:9px;height:17px;background:#f0f0f0;box-shadow:inset 0 0 0 1px #fff;"></div>
<div class="a" style="left:9px;top:481px;width:9px;height:1px;background:#000;"></div>
<div class="a" style="left:19px;top:481px;width:1311px;height:1px;background:#c0c0c0;"></div>
<div class="a" style="left:9px;top:482px;width:9px;height:17px;background:#f0f0f0;box-shadow:inset 0 0 0 1px #fff;"></div>
<div class="a" style="left:9px;top:499px;width:9px;height:1px;background:#000;"></div>
<div class="a" style="left:19px;top:499px;width:1311px;height:1px;background:#c0c0c0;"></div>
<div class="a" style="left:9px;top:500px;width:9px;height:17px;background:#f0f0f0;box-shadow:inset 0 0 0 1px #fff;"></div>
<div class="a" style="left:9px;top:517px;width:9px;height:1px;background:#000;"></div>
<div class="a" style="left:19px;top:517px;width:1311px;height:1px;background:#c0c0c0;"></div>
<div class="a" style="left:9px;top:518px;width:9px;height:17px;background:#f0f0f0;box-shadow:inset 0 0 0 1px #fff;"></div>
<div class="a" style="left:9px;top:535px;width:9px;height:1px;background:#000;"></div>
<div class="a" style="left:19px;top:535px;width:1311px;height:1px;background:#c0c0c0;"></div>
<div class="a" style="left:9px;top:536px;width:9px;height:17px;background:#f0f0f0;box-shadow:inset 0 0 0 1px #fff;"></div>
<div class="a" style="left:9px;top:553px;width:9px;height:1px;background:#000;"></div>
<div class="a" style="left:19px;top:553px;width:1311px;height:1px;background:#c0c0c0;"></div>
<div class="a" style="left:9px;top:554px;width:9px;height:17px;background:#f0f0f0;box-shadow:inset 0 0 0 1px #fff;"></div>
<div class="a" style="left:9px;top:571px;width:9px;height:1px;background:#000;"></div>
<div class="a" style="left:19px;top:571px;width:1311px;height:1px;background:#c0c0c0;"></div>
<div class="a" style="left:9px;top:572px;width:9px;height:17px;background:#f0f0f0;box-shadow:inset 0 0 0 1px #fff;"></div>
<div class="a" style="left:9px;top:589px;width:9px;height:1px;background:#000;"></div>
<div class="a" style="left:19px;top:589px;width:1311px;height:1px;background:#c0c0c0;"></div>
<div class="a" style="left:9px;top:590px;width:9px;height:17px;background:#f0f0f0;box-shadow:inset 0 0 0 1px #fff;"></div>
<div class="a" style="left:9px;top:607px;width:9px;height:1px;background:#000;"></div>
<div class="a" style="left:79px;top:464px;width:1px;height:143px;background:#c0c0c0;"></div>
<div class="a" style="left:200px;top:464px;width:1px;height:143px;background:#c0c0c0;"></div>
<div class="a" style="left:401px;top:464px;width:1px;height:143px;background:#c0c0c0;"></div>
<div class="a" style="left:462px;top:464px;width:1px;height:143px;background:#c0c0c0;"></div>
<div class="a" style="left:583px;top:464px;width:1px;height:143px;background:#c0c0c0;"></div>
<div class="a" style="left:684px;top:464px;width:1px;height:143px;background:#c0c0c0;"></div>
<div class="a" style="left:785px;top:464px;width:1px;height:143px;background:#c0c0c0;"></div>
<div class="a" style="left:886px;top:464px;width:1px;height:143px;background:#c0c0c0;"></div>
<div class="a" style="left:1087px;top:464px;width:1px;height:143px;background:#c0c0c0;"></div>
<div class="a" style="left:1188px;top:464px;width:1px;height:143px;background:#c0c0c0;"></div>
<div class="a" style="left:1309px;top:464px;width:1px;height:143px;background:#c0c0c0;"></div>
<div class="a" style="left:19px;top:481px;width:1311px;height:1px;background:#0078d7;"></div>
<div class="a" style="left:19px;top:464px;width:1px;height:17px;background:#0078d7;"></div>
<div class="a" style="left:1329px;top:464px;width:1px;height:17px;background:#0078d7;"></div>
<div class="t" style="left:42px;top:466px;color:#fff;"><span style="letter-spacing:0.33px">11918</span></div>
<div class="t" style="left:82px;top:466px;width:118px;overflow:hidden;color:#fff;"><span style="letter-spacing:0.33px">000007</span></div>
<div class="t" style="left:203px;top:466px;width:198px;overflow:hidden;color:#fff;"><span style="letter-spacing:-1px">X</span><span style="letter-spacing:-0.33px"> </span>S<span style="letter-spacing:-1px">A</span><span style="letter-spacing:0.33px">L</span><span style="letter-spacing:-1px">A</span><span style="letter-spacing:0.33px">D</span><span style="letter-spacing:-1px">A</span></div>
<div class="t" style="left:453px;top:466px;color:#fff;"><span style="letter-spacing:0.33px">1</span></div>
<svg class="a" style="left:13px;top:471px" width="5" height="7" viewBox="0 0 5 7"><path d="M0 0L5 3.500L0 7z" fill="#000"/></svg>
<div class="a" style="left:1330px;top:446px;width:1px;height:162px;background:#fff;"></div>
<div class="a" style="left:19px;top:607px;width:1312px;height:1px;background:#fff;"></div>
<div class="a" style="left:10px;top:608px;width:4px;height:15px;background:#000;"></div>
<svg class="a" style="left:1334px;top:451px" width="9" height="8" viewBox="0 0 9 8"><path d="M1.300 6.200L4.500 2.800L7.700 6.200" fill="none" stroke="#565656" stroke-width="1.900"/></svg>
<svg class="a" style="left:1334px;top:596px" width="9" height="8" viewBox="0 0 9 8"><path d="M1.300 1.800L4.500 5.200L7.700 1.800" fill="none" stroke="#565656" stroke-width="1.900"/></svg>
<svg class="a" style="left:18px;top:611px" width="8" height="9" viewBox="0 0 8 9"><path d="M6.200 1.300L2.800 4.500L6.200 7.700" fill="none" stroke="#565656" stroke-width="1.900"/></svg>
<svg class="a" style="left:1319px;top:611px" width="8" height="9" viewBox="0 0 8 9"><path d="M1.800 1.300L5.200 4.500L1.800 7.700" fill="none" stroke="#565656" stroke-width="1.900"/></svg>
</body></html>
